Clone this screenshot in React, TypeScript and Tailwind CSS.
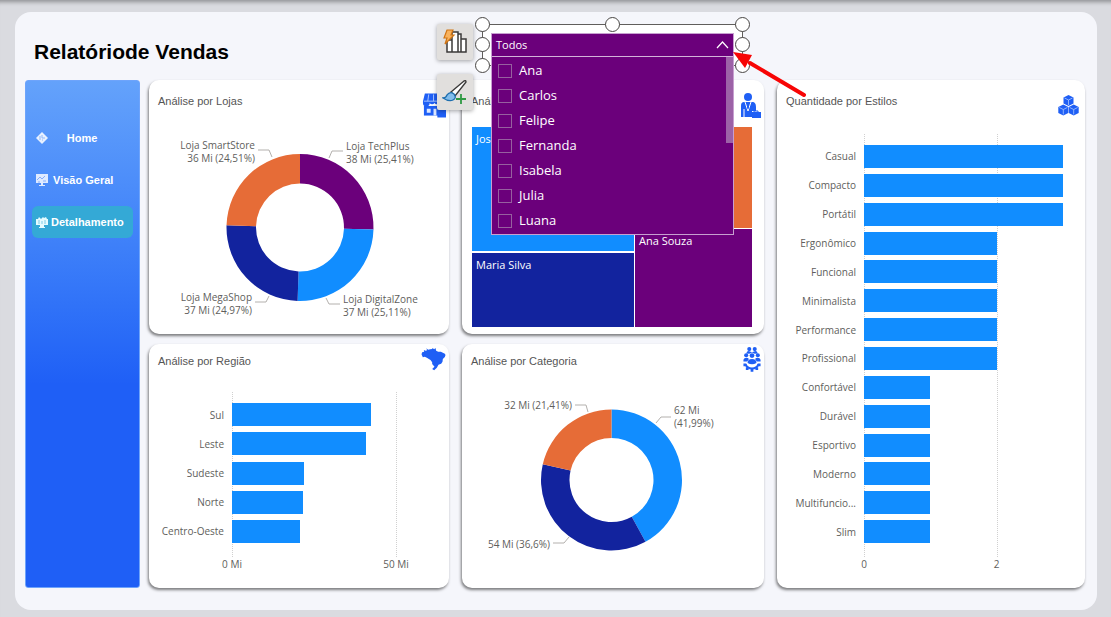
import { useState } from "react";
import type { ReactNode } from "react";

type Bar = { label: string; value: number };
type Tick = { at: number; text: string };
type Slice = { value: number; color: string };
type Callout = {
  lines: string[];
  x: number;
  y: number;
  anchor: "start" | "end";
  points: string;
};

const estilos: Bar[] = [
  { label: "Casual", value: 3 },
  { label: "Compacto", value: 3 },
  { label: "Portátil", value: 3 },
  { label: "Ergonômico", value: 2 },
  { label: "Funcional", value: 2 },
  { label: "Minimalista", value: 2 },
  { label: "Performance", value: 2 },
  { label: "Profissional", value: 2 },
  { label: "Confortável", value: 1 },
  { label: "Durável", value: 1 },
  { label: "Esportivo", value: 1 },
  { label: "Moderno", value: 1 },
  { label: "Multifuncio...", value: 1 },
  { label: "Slim", value: 1 },
];

const regioes: Bar[] = [
  { label: "Sul", value: 42.3 },
  { label: "Leste", value: 41 },
  { label: "Sudeste", value: 21.9 },
  { label: "Norte", value: 21.6 },
  { label: "Centro-Oeste", value: 20.8 },
];

const lojas: Slice[] = [
  { value: 25.41, color: "#6b007b" },
  { value: 25.11, color: "#118dff" },
  { value: 24.97, color: "#12239e" },
  { value: 24.51, color: "#e66c37" },
];

const lojasLabels: Callout[] = [
  { lines: ["Loja SmartStore", "36 Mi (24,51%)"], x: 106, y: 27, anchor: "end", points: "109,28 120,28 123,35" },
  { lines: ["Loja TechPlus", "38 Mi (25,41%)"], x: 197, y: 28, anchor: "start", points: "194,29 183,29 180,36" },
  { lines: ["Loja MegaShop", "37 Mi (24,97%)"], x: 103, y: 179, anchor: "end", points: "106,180 117,180 120,174" },
  { lines: ["Loja DigitalZone", "37 Mi (25,11%)"], x: 194, y: 181, anchor: "start", points: "191,182 180,182 177,176" },
];

const categorias: Slice[] = [
  { value: 41.99, color: "#118dff" },
  { value: 36.6, color: "#12239e" },
  { value: 21.41, color: "#e66c37" },
];

const categoriasLabels: Callout[] = [
  { lines: ["32 Mi (21,41%)"], x: 109, y: 31, anchor: "end", points: "112,27 123,27 125,34" },
  { lines: ["62 Mi", "(41,99%)"], x: 211, y: 36, anchor: "start", points: "208,39 198,39 193,45" },
  { lines: ["54 Mi (36,6%)"], x: 87, y: 170, anchor: "end", points: "90,165 101,165 106,159" },
];

const nomes = ["Ana", "Carlos", "Felipe", "Fernanda", "Isabela", "Julia", "Luana"];

function slicePath(cx: number, cy: number, outer: number, inner: number, from: number, to: number) {
  const a = from * 2 * Math.PI - Math.PI / 2;
  const b = to * 2 * Math.PI - Math.PI / 2;
  const large = to - from > 0.5 ? 1 : 0;
  const p = (r: number, t: number) => `${cx + r * Math.cos(t)} ${cy + r * Math.sin(t)}`;
  return `M${p(outer, a)} A${outer} ${outer} 0 ${large} 1 ${p(outer, b)} L${p(inner, b)} A${inner} ${inner} 0 ${large} 0 ${p(inner, a)} Z`;
}

function Donut({
  slices,
  callouts,
  cx,
  cy,
  outer,
  inner,
}: {
  slices: Slice[];
  callouts: Callout[];
  cx: number;
  cy: number;
  outer: number;
  inner: number;
}) {
  let start = 0;
  return (
    <svg width="300" height="210" viewBox="0 0 300 210" className="mx-auto">
      {slices.map((s) => {
        const from = start;
        start += s.value / 100;
        return <path key={s.color} d={slicePath(cx, cy, outer, inner, from, start)} fill={s.color} />;
      })}
      {callouts.map((c) => (
        <g key={c.points}>
          <polyline points={c.points} fill="none" stroke="#b3b0ad" strokeWidth="1" />
          {c.lines.map((line, i) => (
            <text
              key={line}
              x={c.x}
              y={c.y + i * 13}
              textAnchor={c.anchor}
              className="fill-[#605e5c] font-['Open_Sans',sans-serif] text-[10px]"
            >
              {line}
            </text>
          ))}
        </g>
      ))}
    </svg>
  );
}

function BarChart({ bars, ticks, max }: { bars: Bar[]; ticks: Tick[]; max: number }) {
  return (
    <div className="flex min-h-0 flex-1 flex-col font-['Open_Sans',sans-serif] text-[10px] leading-[14px] text-[#605e5c]">
      <div className="relative flex flex-1 flex-col pt-2 pb-[11px]">
        <div className="absolute inset-y-0 right-0 left-[87px]">
          {ticks.map((t) => (
            <div
              key={t.text}
              className="absolute inset-y-0 border-l border-dotted border-[#d0d0d0]"
              style={{ left: `${(t.at / max) * 100}%` }}
            />
          ))}
        </div>
        {bars.map((b) => (
          <div key={b.label} className="relative flex flex-1 items-center gap-2">
            <div className="w-[79px] text-right whitespace-nowrap">{b.label}</div>
            <div className="flex-1">
              <div className="h-[23px] bg-[#118dff]" style={{ width: `${(b.value / max) * 100}%` }} />
            </div>
          </div>
        ))}
      </div>
      <div className="relative ml-[87px] h-[14px]">
        {ticks.map((t) => (
          <span
            key={t.text}
            className="absolute -translate-x-1/2 whitespace-nowrap"
            style={{ left: `${(t.at / max) * 100}%` }}
          >
            {t.text}
          </span>
        ))}
      </div>
    </div>
  );
}

function Card({
  title,
  icon,
  tall,
  className,
  children,
}: {
  title: string;
  icon: ReactNode;
  tall?: boolean;
  className?: string;
  children: ReactNode;
}) {
  return (
    <section
      className={`flex flex-col rounded-[10px] bg-white shadow-[-1px_2px_3px_rgba(0,0,0,0.5)] ${className ?? ""}`}
    >
      <header className={`flex items-center justify-between pr-[3px] pl-[9px] ${tall ? "h-[42px]" : "h-[34px]"}`}>
        <h2 className="text-[11px] text-[#555555]">{title}</h2>
        <div className={tall ? "pt-2" : "pb-1"}>{icon}</div>
      </header>
      {children}
    </section>
  );
}

function StoreIcon() {
  return (
    <svg width="24" height="26" viewBox="0 0 25 26" fill="#1f5ff5">
      <path d="M3 1h17l3 8v2a3 3 0 0 1-5 0 3 3 0 0 1-5 0 3 3 0 0 1-5 0 3 3 0 0 1-7 0V9z" />
      <path d="M2 14h19v10H2z" />
      <path d="M5 17h4v4H5zM12 17h3v7h-3z" fill="#dbe7ff" />
      <path d="M7 2 6 9M12 2v7M16 2l1 7M2 9h20" stroke="#a9c6ff" />
      <path d="M16 17h9v9h-9z" />
      <path d="M18 17a2 2 0 0 1 5 0" fill="none" stroke="#1f5ff5" />
    </svg>
  );
}

function SellerIcon() {
  return (
    <svg width="21" height="26" viewBox="0 0 21 26" fill="#1f5ff5">
      <circle cx="8" cy="5" r="4" />
      <path d="M4 10h8c3 0 4 2 4 5v4h-4v6H1v-6h0v-5c0-3 1-4 3-4z" />
      <path d="m5 10 3 9 3-9M4 17v8" fill="none" stroke="#fff" />
      <path d="m8 11-1 4 1 3 1-3z" />
      <path d="M12 20h9v6h-9z" />
      <path d="M14 20v-1h4v1" fill="none" stroke="#1f5ff5" />
    </svg>
  );
}

function BrazilIcon() {
  return (
    <svg width="25" height="24" viewBox="33 36 74 72" fill="#1f5ff5">
      <path d="M34 58 36 52 42 50 41 45 46 47 51 46 48 40 54 44 60 43 66 42 67 39 72 43 76 39 78 47 84 50 92 50 104 56 106 60 104 66 98 72 97 80 93 86 85 89 80 98 72 106 66 102 73 95 66 87 66 82 61 75 50 68 44 65 38 67z" />
    </svg>
  );
}

function TeamIcon() {
  return (
    <svg width="18" height="26" viewBox="810 22 52 76" fill="#1f5ff5">
      <circle cx="828" cy="31" r="6" />
      <circle cx="844" cy="31" r="6" />
      <path d="M819 44q2-8 9-7l8 3 8-3q7-1 9 7l-9 1-8-4-8 4z" />
      <circle cx="819" cy="49" r="6" />
      <circle cx="853" cy="49" r="6" />
      <circle cx="836" cy="50" r="7" />
      <path d="M811 67v-5q2-6 8-6t8 4l-5 7zM861 67v-5q-2-6-8-6t-8 4l5 7z" />
      <path d="M823 72q0-12 13-12t13 12q-13 7-26 0z" />
      <path d="M817 75q5 13 19 13t19-13" fill="none" stroke="#1f5ff5" strokeWidth="6" />
      <path d="M811 73h8v8h-8zM853 73h8v8h-8zM818 84h8v8h-8zM846 84h8v8h-8zM832 88h8v9h-8z" />
    </svg>
  );
}

function CubesIcon() {
  const cube = (x: number, y: number) => (
    <g key={`${x}-${y}`} transform={`translate(${x} ${y})`}>
      <path d="m5 0 5 2.500v6L5 11 0 8.500v-6z" fill="#1f5ff5" />
      <path d="m1 3 4 2 4-2M5 5v5" fill="none" stroke="#a9c6ff" strokeWidth=".8" />
    </g>
  );
  return (
    <svg width="24" height="21" viewBox="0 0 24 21">
      {[cube(5.5, 0), cube(0.3, 9.5), cube(10.7, 9.5)]}
    </svg>
  );
}

function HomeIcon() {
  return (
    <svg width="12" height="12" viewBox="0 0 12 12">
      <path d="m6 0 6 6-6 6-6-6z" fill="#e8f1ff" />
      <path d="M4 4v4M6 3v3h3M6 8h1" fill="none" stroke="#8fb8fb" />
    </svg>
  );
}

function MonitorIcon() {
  return (
    <svg width="12" height="12" viewBox="0 0 12 12">
      <path d="M0 0h12v9H0zM5 9h2v2h2v1H3v-1h2z" fill="#dfeaff" />
      <path d="m1 6 3-3 2 2 3-3M7 7h3M2 8h2" fill="none" stroke="#86adfb" />
    </svg>
  );
}

function DetailIcon() {
  return (
    <svg width="12" height="12" viewBox="0 0 12 12">
      <path d="M0 3h2l1-2 2 2 2-2 1 1 2-1 1 2h1v6H0zM4 9h4v2h1v1H3v-1h1z" fill="#e4fbff" />
      <path d="M3 4v4M6 5v3M9 4v4" stroke="#7fcbe6" />
    </svg>
  );
}

function Sidebar() {
  const item = "flex h-8 items-center gap-[3px] rounded-md pl-1 text-[11px] font-bold text-white";
  return (
    <nav className="flex w-[115px] flex-col gap-[10px] rounded-[3px] border border-[#6ea4fb] bg-linear-to-b from-[#64a2fb] to-[#1f5ff6] to-60% px-[6px] pt-[41px]">
      <a href="#home" className={item}>
        <HomeIcon />
        <span className="flex-1 pr-5 text-center">Home</span>
      </a>
      <a href="#visao-geral" className={item}>
        <MonitorIcon />
        <span className="pl-[2px]">Visão Geral</span>
      </a>
      <a href="#detalhamento" className={`${item} bg-[#34a9d6]`}>
        <DetailIcon />
        <span>Detalhamento</span>
      </a>
    </nav>
  );
}

function Toolbar() {
  const button = "flex size-9 items-center justify-center rounded-xs bg-[#e1dfdd] shadow-[0_1px_4px_rgba(0,0,0,0.35)]";
  return (
    <div className="absolute -top-14 -left-[25px] flex flex-col gap-[14px]">
      <button type="button" aria-label="Gráfico" className={button}>
        <svg width="26" height="26" viewBox="0 0 26 26">
          <path d="M5 23V11h5V3h6v20zM16 23V5h3v18zM19 23V10h5v13zM10 11v12" fill="#fff" stroke="#3b3a39" strokeWidth="1.500" />
          <path d="M5 1h6L9 6h3L3 15l2-6H2z" fill="#f9b25c" stroke="#d07413" strokeWidth="1.200" />
        </svg>
      </button>
      <button type="button" aria-label="Formatar" className={button}>
        <svg width="26" height="26" viewBox="0 0 26 26">
          <path d="M9 13 22 2q2-1 2 1L13 17z" fill="#fff" stroke="#3b3a39" strokeWidth="1.400" />
          <path d="M1 19q3 0 4-3 3-4 7-1 3 4-1 6-4 2-10-2z" fill="#83bdec" stroke="#1f6fae" strokeWidth="1.300" />
          <path d="M19 15v10M14 20h10" stroke="#2f9a43" strokeWidth="1.800" />
        </svg>
      </button>
    </div>
  );
}

function Slicer() {
  const [open, setOpen] = useState(true);
  const handles = [
    [8.5, 8.5],
    [138.5, 8.5],
    [268.5, 8.5],
    [8.5, 28.5],
    [268.5, 28.5],
    [8.5, 49.5],
    [268.5, 49.5],
  ];
  return (
    <div className="absolute -top-16 left-3 font-['Open_Sans',sans-serif] text-white">
      <svg width="276" height="57" viewBox="0 0 276 57">
        <rect x="8.500" y="8.500" width="260" height="41" fill="#fff" stroke="#605e5c" />
        {handles.map(([x, y]) => (
          <circle key={`${x}-${y}`} cx={x} cy={y} r="7" fill="#fff" stroke="#484644" />
        ))}
      </svg>
      <div className="absolute top-[17px] left-[17px] w-[243px] border border-[#c79fd0] bg-[#6b007b]">
        <button
          type="button"
          aria-expanded={open}
          onClick={() => setOpen(!open)}
          className="flex h-[23px] w-full items-center justify-between border-b border-[#d3b2da] pr-1 pl-1 text-[11px]"
        >
          Todos
          <svg width="13" height="8" viewBox="0 0 13 8">
            <path d="m1 7 5.500-6L12 7" fill="none" stroke="#fff" strokeWidth="1.200" />
          </svg>
        </button>
        {open && (
          <div className="relative py-px">
            {nomes.map((nome) => (
              <label key={nome} className="flex h-[25px] items-center gap-[7px] pl-[6px] text-[13px]">
                <input type="checkbox" className="size-[14px] appearance-none border border-[#96609f]" />
                {nome}
              </label>
            ))}
            <div className="absolute top-0 right-0 h-[86px] w-[7px] bg-[#9c62a7]" />
          </div>
        )}
      </div>
      <svg width="76" height="50" viewBox="0 0 76 50" className="absolute top-[35px] left-[258px]">
        <path d="m18 12 54 32" stroke="#f70505" strokeWidth="4" strokeLinecap="round" />
        <path d="M1 1 20 4 13 17z" fill="#f70505" />
      </svg>
    </div>
  );
}

function Treemap() {
  return (
    <div className="mr-3 mb-[7px] ml-[10px] mt-[5px] grid flex-1 grid-cols-[162fr_117fr] gap-px font-['Open_Sans',sans-serif] text-[11px] leading-4 text-white">
      <div className="grid grid-rows-[124fr_74fr] gap-[2px]">
        <div className="bg-[#118dff] px-1 py-1">José</div>
        <div className="bg-[#12239e] px-1 py-1">Maria Silva</div>
      </div>
      <div className="grid grid-rows-[101fr_98fr] gap-px">
        <div className="bg-[#e66c37]" />
        <div className="bg-[#6b007b] px-1 py-1">Ana Souza</div>
      </div>
    </div>
  );
}

export default function App() {
  return (
    <div className="flex min-h-screen flex-col bg-[#dadbe0] pt-3 pr-[14px] pb-[7px] pl-[15px] font-['Liberation_Sans',Arial,sans-serif] shadow-[inset_0_6px_4px_-4px_rgba(0,0,0,0.35)]">
      <main className="flex flex-1 flex-col rounded-2xl bg-[#f5f6fb] pr-3 pb-[22px] pl-[10px]">
        <header className="flex h-[68px] items-center pt-3 pl-[9px]">
          <h1 className="text-[21px] font-bold text-black">Relatóriode Vendas</h1>
        </header>
        <div className="flex flex-1 gap-[9px]">
          <Sidebar />
          <div className="grid flex-1 grid-cols-[300fr_302fr_308fr] grid-rows-[254fr_244fr] gap-x-[13px] gap-y-[10px]">
            <Card title="Análise por Lojas" icon={<StoreIcon />} tall>
              <Donut slices={lojas} callouts={lojasLabels} cx={151} cy={105.5} outer={73.5} inner={44} />
            </Card>
            <div className="relative flex">
              <Card title="Análise" icon={<SellerIcon />} tall className="flex-1">
                <Treemap />
              </Card>
              <Toolbar />
              <Slicer />
            </div>
            <Card title="Quantidade por Estilos" icon={<CubesIcon />} tall className="row-span-2">
              <div className="flex flex-1 pt-3 pr-[22px] pb-[17px]">
                <BarChart bars={estilos} max={3} ticks={[{ at: 0, text: "0" }, { at: 2, text: "2" }]} />
              </div>
            </Card>
            <Card title="Análise por Região" icon={<BrazilIcon />}>
              <div className="-ml-1 flex flex-1 pt-[14px] pr-[53px] pb-[17px]">
                <BarChart bars={regioes} max={50} ticks={[{ at: 0, text: "0 Mi" }, { at: 50, text: "50 Mi" }]} />
              </div>
            </Card>
            <Card title="Análise por Categoria" icon={<TeamIcon />}>
              <Donut slices={categorias} callouts={categoriasLabels} cx={148.5} cy={102} outer={70.5} inner={42} />
            </Card>
          </div>
        </div>
      </main>
    </div>
  );
}
